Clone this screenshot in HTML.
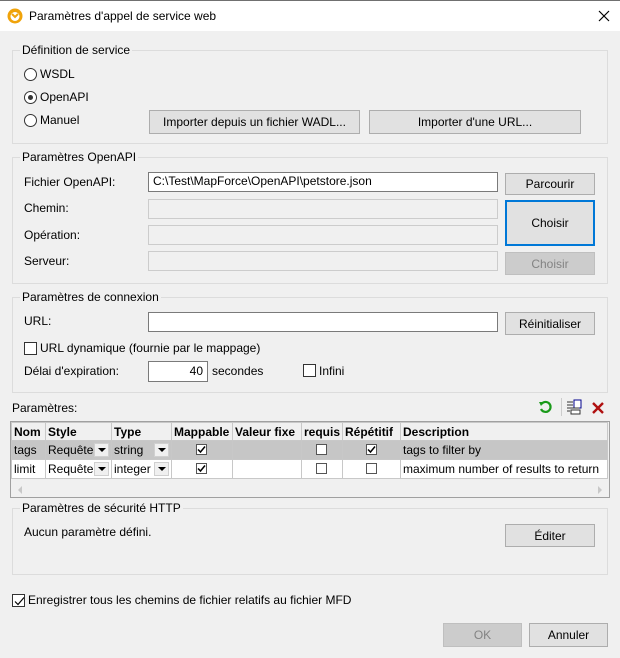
<!DOCTYPE html>
<html><head><meta charset="utf-8"><style>
*{box-sizing:border-box;margin:0;padding:0}
body{width:620px;height:658px;background:#f0f0f0;font-family:"Liberation Sans",sans-serif;font-size:12px;color:#000;position:relative;overflow:hidden}
.a{position:absolute;white-space:nowrap}
.t{position:absolute;white-space:nowrap;line-height:14px}
.grp{position:absolute;border:1px solid #dcdcdc}
.gl{position:absolute;background:#f0f0f0;padding:0 2px;line-height:14px;top:-8px;left:7px}
.btn{position:absolute;background:#e1e1e1;border:1px solid #adadad;text-align:center;display:flex;align-items:center;justify-content:center}
.dis{background:#cccccc;border-color:#bfbfbf;color:#838383}
.inp{position:absolute;background:#fff;border:1px solid #7a7a7a;padding-left:4px;line-height:17px}
.inpd{background:#f0f0f0;border-color:#cccccc}
.rad{position:absolute;width:13px;height:13px;border:1px solid #333;border-radius:50%;background:#fff}
.rad.on::after{content:"";position:absolute;left:3px;top:3px;width:5px;height:5px;border-radius:50%;background:#333}
.cb{position:absolute;width:13px;height:13px;border:1px solid #333;background:#fff}
.cb svg{position:absolute;left:1px;top:1px}
table{border-collapse:collapse;position:absolute;left:11px;top:422px;table-layout:fixed}
td{border:1px solid #c8c8c8;height:19px;padding:0 2px;white-space:nowrap;overflow:hidden;position:relative}
th{border:1px solid #c8c8c8;height:18px;padding:0 2px;text-align:left;font-weight:bold;background:#f0f0f0}
.g td{background:#c6c6c6}
.dd{position:absolute;right:2px;top:2px;width:15px;height:14px;background:#f0f0f0;border:1px solid #d0d0d0}
.dd::after{content:"";position:absolute;left:3px;top:4px;border-left:4px solid transparent;border-right:4px solid transparent;border-top:4px solid #000}
.sc{position:absolute;width:11px;height:11px;border:1px solid #555;background:#fff;left:50%;top:3px;margin-left:-6px}
</style></head><body>
<div class="a" style="left:0;top:0;width:620px;height:31px;background:#fff;border-top:1px solid #707070"></div>
<svg class="a" style="left:7px;top:8px" width="16" height="16"><circle cx="8" cy="8" r="7.5" fill="#f0a30a"/><circle cx="8" cy="8.5" r="4.5" fill="#fff"/><path d="M5 6 L8 9 L11 6" stroke="#f0a30a" stroke-width="2" fill="none"/></svg>
<div class="t" style="left:29px;top:9px">Paramètres d'appel de service web</div>
<svg class="a" style="left:598px;top:10px" width="12" height="12"><path d="M1 1L11 11M11 1L1 11" stroke="#000" stroke-width="1.2"/></svg>

<div class="grp" style="left:12px;top:50px;width:596px;height:94px"><div class="gl">Définition de service</div></div>
<div class="rad" style="left:24px;top:68px"></div><div class="t" style="left:40px;top:67px">WSDL</div>
<div class="rad on" style="left:24px;top:91px"></div><div class="t" style="left:40px;top:90px">OpenAPI</div>
<div class="rad" style="left:24px;top:114px"></div><div class="t" style="left:40px;top:113px">Manuel</div>
<div class="btn" style="left:149px;top:110px;width:211px;height:24px">Importer depuis un fichier WADL...</div>
<div class="btn" style="left:369px;top:110px;width:212px;height:24px">Importer d'une URL...</div>

<div class="grp" style="left:12px;top:157px;width:596px;height:127px"><div class="gl">Paramètres OpenAPI</div></div>
<div class="t" style="left:24px;top:175px">Fichier OpenAPI:</div>
<div class="inp" style="left:148px;top:172px;width:350px;height:20px">C:\Test\MapForce\OpenAPI\petstore.json</div>
<div class="btn" style="left:505px;top:173px;width:90px;height:22px">Parcourir</div>
<div class="t" style="left:24px;top:201px">Chemin:</div>
<div class="inp inpd" style="left:148px;top:199px;width:350px;height:20px"></div>
<div class="t" style="left:24px;top:228px">Opération:</div>
<div class="inp inpd" style="left:148px;top:225px;width:350px;height:20px"></div>
<div class="t" style="left:24px;top:254px">Serveur:</div>
<div class="inp inpd" style="left:148px;top:251px;width:350px;height:20px"></div>
<div class="btn" style="left:505px;top:200px;width:90px;height:46px;border:2px solid #0078d7">Choisir</div>
<div class="btn dis" style="left:505px;top:252px;width:90px;height:23px">Choisir</div>

<div class="grp" style="left:12px;top:297px;width:596px;height:96px"><div class="gl">Paramètres de connexion</div></div>
<div class="t" style="left:24px;top:314px">URL:</div>
<div class="inp" style="left:148px;top:312px;width:350px;height:20px"></div>
<div class="btn" style="left:505px;top:312px;width:90px;height:23px">Réinitialiser</div>
<div class="cb" style="left:24px;top:342px"></div><div class="t" style="left:40px;top:341px">URL dynamique (fournie par le mappage)</div>
<div class="t" style="left:24px;top:364px">Délai d'expiration:</div>
<div class="inp" style="left:148px;top:361px;width:60px;height:21px;text-align:right;padding-right:4px;line-height:19px">40</div>
<div class="t" style="left:212px;top:364px">secondes</div>
<div class="cb" style="left:303px;top:364px"></div><div class="t" style="left:319px;top:364px">Infini</div>

<div class="t" style="left:12px;top:401px">Paramètres:</div>
<svg class="a" style="left:538px;top:400px" width="14" height="14"><path d="M3.5 4 A5 5 0 1 1 3 9" stroke="#1a9a1a" stroke-width="2.2" fill="none"/><path d="M1 2 L6 2 L3 6Z" fill="#1a9a1a"/></svg>
<div class="a" style="left:561px;top:398px;width:1px;height:18px;background:#ccc"></div>
<svg class="a" style="left:566px;top:399px" width="18" height="16"><rect x="8" y="1" width="7" height="8" fill="#fff" stroke="#00008b"/><path d="M1 3h6M1 6h6M1 9h12M1 12h3" stroke="#333"/><rect x="5" y="11" width="9" height="4" fill="#fff" stroke="#333"/></svg>
<svg class="a" style="left:591px;top:401px" width="14" height="14"><path d="M2 2L12 12M12 2L2 12" stroke="#b01010" stroke-width="2.4"/></svg>

<div class="a" style="left:10px;top:421px;width:600px;height:77px;background:#f0f0f0;border:1px solid #a0a0a0"></div>
<table>
<colgroup><col style="width:34px"><col style="width:66px"><col style="width:60px"><col style="width:61px"><col style="width:69px"><col style="width:40px"><col style="width:58px"><col style="width:207px"></colgroup>
<tr><th>Nom</th><th>Style</th><th>Type</th><th>Mappable</th><th>Valeur fixe</th><th>requis</th><th>Répétitif</th><th>Description</th></tr>
<tr class="g"><td>tags</td><td>Requête<span class="dd"></span></td><td>string<span class="dd"></span></td><td><span class="sc"><svg width="9" height="9" style="position:absolute;left:0;top:0"><path d="M1 4.5L3.5 7L8 1.5" stroke="#000" stroke-width="1.5" fill="none"/></svg></span></td><td></td><td><span class="sc"></span></td><td><span class="sc"><svg width="9" height="9" style="position:absolute;left:0;top:0"><path d="M1 4.5L3.5 7L8 1.5" stroke="#000" stroke-width="1.5" fill="none"/></svg></span></td><td>tags to filter by</td></tr>
<tr><td style="background:#fff">limit</td><td style="background:#fff">Requête<span class="dd"></span></td><td style="background:#fff">integer<span class="dd"></span></td><td style="background:#fff"><span class="sc"><svg width="9" height="9" style="position:absolute;left:0;top:0"><path d="M1 4.5L3.5 7L8 1.5" stroke="#000" stroke-width="1.5" fill="none"/></svg></span></td><td style="background:#fff"></td><td style="background:#fff"><span class="sc"></span></td><td style="background:#fff"><span class="sc"></span></td><td style="background:#fff">maximum number of results to return</td></tr>
</table>
<div class="a" style="left:18px;top:486px;border-right:4px solid #c8c8c8;border-top:4px solid transparent;border-bottom:4px solid transparent"></div>
<div class="a" style="left:598px;top:486px;border-left:4px solid #c8c8c8;border-top:4px solid transparent;border-bottom:4px solid transparent"></div>

<div class="grp" style="left:12px;top:508px;width:596px;height:67px"><div class="gl">Paramètres de sécurité HTTP</div></div>
<div class="t" style="left:24px;top:525px">Aucun paramètre défini.</div>
<div class="btn" style="left:505px;top:524px;width:90px;height:23px">Éditer</div>

<div class="cb" style="left:12px;top:594px"><svg width="11" height="11"><path d="M1 5.5L4 8.5L10 1.5" stroke="#000" stroke-width="1.2" fill="none"/></svg></div>
<div class="t" style="left:28px;top:593px">Enregistrer tous les chemins de fichier relatifs au fichier MFD</div>
<div class="btn dis" style="left:443px;top:623px;width:79px;height:24px">OK</div>
<div class="btn" style="left:529px;top:623px;width:79px;height:24px">Annuler</div>
</body></html>
